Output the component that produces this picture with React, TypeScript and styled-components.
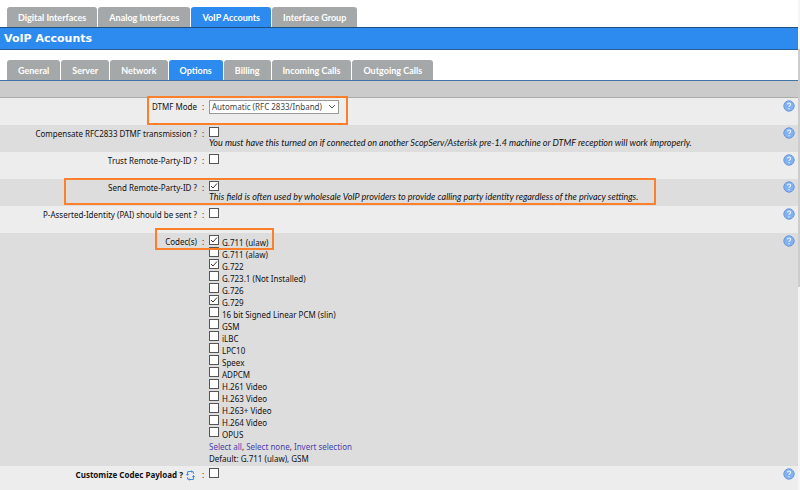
import React, { useState } from "react";
import styled, { createGlobalStyle, css } from "styled-components";

const GlobalStyle = createGlobalStyle`
  * { box-sizing: border-box; }
  html, body { margin: 0; height: 100%; background: #fff; }
  body {
    overflow: hidden;
    color: #111;
    font-family: "Noto Sans", sans-serif;
    font-size: 8px;
    line-height: 12px;
  }
`;

const Page = styled.div`
  display: flex;
  height: 100vh;
  overflow: hidden;
`;

const Main = styled.main`
  flex: 1;
  min-width: 0;
`;

const ScrollTrack = styled.div`
  flex: 0 0 2px;
  padding-top: 49px;
  background: #f5f5f5;
`;

const ScrollThumb = styled.div`
  height: 54%;
  background: #cdcdcd;
`;

const TabBar = styled.nav<{ $gap: number }>`
  display: flex;
  gap: 1px;
  padding: ${(p) => p.$gap}px 7px 0;
`;

const Tab = styled.button<{ $active?: boolean }>`
  height: 20px;
  padding: 1px 11px 0;
  border: 0;
  border-radius: 3px 3px 0 0;
  background: ${(p) => (p.$active ? "#2d8aef" : "#a5a8a8")};
  color: #fff;
  font: bold 9px/12px Lato, sans-serif;
  white-space: nowrap;
`;

const Title = styled.h1`
  height: 23px;
  margin: 0;
  padding: 0 4px;
  border-top: 1px solid #1d4f82;
  border-bottom: 1px solid #245f9c;
  background: #2d8aef;
  color: #fff;
  font: bold 11px/22px "DejaVu Sans", sans-serif;
`;

const Band = styled.div`
  height: 18px;
  border-top: 1px solid #3f74a8;
  border-bottom: 1px solid #ababab;
  background: #cbcbcb;
`;

const Row = styled.div<{ $dark?: boolean }>`
  position: relative;
  display: grid;
  grid-template-columns: 197px 12px 1fr 18px;
  min-height: 27px;
  padding-top: 2px;
  background: ${(p) => (p.$dark ? "#dddddd" : "#ededed")};
`;

const LabelCell = styled.div<{ $bold?: boolean }>`
  display: flex;
  justify-content: flex-end;
  align-items: center;
  gap: 3px;
  height: 14px;
  font-weight: ${(p) => (p.$bold ? 700 : 400)};
  white-space: nowrap;

  svg { margin-right: 2px; }
`;

const Colon = styled.span`
  padding-left: 5px;
  line-height: 14px;
`;

const Field = styled.div`
  min-width: 0;
`;

const Hint = styled.p`
  margin: 0;
  font-family: Lato, sans-serif;
  font-size: 9px;
  font-style: italic;
  line-height: 12px;
  white-space: nowrap;
`;

const Highlight = styled.span<{ $left: number; $width: number; $top: number; $height: number }>`
  position: absolute;
  ${(p) => css`
    left: ${p.$left}px;
    top: ${p.$top}px;
    width: ${p.$width}px;
    height: ${p.$height}px;
  `}
  border: 2px solid #fd7f2b;
  pointer-events: none;
  z-index: 1;
`;

const HelpButton = styled.button`
  width: 12px;
  height: 12px;
  padding: 0;
  border: 0;
  background: none;
  justify-self: center;

  svg { display: block; }
`;

const SelectBox = styled.span`
  display: inline-grid;
  align-items: center;
  width: 130px;

  select, svg { grid-area: 1 / 1; }
  svg { justify-self: end; margin-right: 3px; pointer-events: none; }
`;

const Select = styled.select`
  appearance: none;
  height: 14px;
  width: 100%;
  padding: 0 2px;
  border: 1px solid #999;
  border-radius: 0;
  background: #fff;
  color: #444;
  font: inherit;
`;

const Tick = styled.span`
  display: grid;
  flex: none;
  width: 10px;
  height: 10px;

  input, svg { grid-area: 1 / 1; }
  svg { pointer-events: none; }
`;

const TickInput = styled.input`
  appearance: none;
  width: 10px;
  height: 10px;
  margin: 0;
  border: 1px solid #555;
  background: #fff;
`;

const CodecList = styled.ul`
  margin: 0;
  padding: 0;
  list-style: none;
`;

const CodecItem = styled.li`
  display: flex;
  gap: 3px;
  height: 12px;
`;

const CodecLabel = styled.label`
  line-height: 16px;
  white-space: nowrap;
`;

const Note = styled.p`
  margin: 0;
  line-height: 12px;
`;

const Codecs = styled.div`
  display: grid;
  gap: 2px;
  padding-bottom: 1px;
`;

const Link = styled.a`
  color: #4a3fae;
  text-decoration: none;
`;

function Check({ id, on }: { id: string; on?: boolean }) {
  const [checked, setChecked] = useState(!!on);
  return (
    <Tick>
      <TickInput id={id} type="checkbox" checked={checked} onChange={() => setChecked(!checked)} />
      {checked && (
        <svg width="10" height="10" viewBox="0 0 10 10" fill="none" stroke="#333" strokeWidth="1">
          <path d="M2 5l2 2 4-4.500" />
        </svg>
      )}
    </Tick>
  );
}

function Help({ topic }: { topic: string }) {
  return (
    <HelpButton type="button" aria-label={`Help: ${topic}`}>
      <svg width="12" height="12" viewBox="0 0 12 12" fill="none">
        <circle cx="6" cy="6" r="5.2" fill="#82b2f3" stroke="#6a98dc" strokeWidth="1" />
        <path d="M4.500 4.600c0-2.100 3.100-2 3.100-.1C7.600 5.700 6 5.700 6 7.100" stroke="#f2f7ff" strokeWidth="1.100" />
        <circle cx="6" cy="8.800" r=".7" fill="#f2f7ff" />
      </svg>
    </HelpButton>
  );
}

const RefreshIcon = () => (
  <svg width="9" height="11" viewBox="0 0 9 11" fill="none" stroke="#3c8ade" strokeWidth="1.100">
    <path d="M1.500 5V2.500Q1.500 1.500 2.500 1.500H6Q7.500 1.500 7.500 3V3.800" />
    <path d="M7.500 5.500V8.500Q7.500 9.500 6.500 9.500H3Q1.500 9.500 1.500 8V7.200" />
    <path d="M0 4l1.500 1.500L3 4M6 7l1.500-1.500L9 7M5 .5l1.200 1L5 2.500M4 8.500l-1.200 1L4 10.500" strokeWidth=".7" />
  </svg>
);

interface OptionRowProps {
  id: string;
  label: string;
  dark?: boolean;
  bold?: boolean;
  icon?: React.ReactNode;
  mark?: [number, number, number, number];
  children: React.ReactNode;
}

function OptionRow({ id, label, dark, bold, icon, mark, children }: OptionRowProps) {
  return (
    <Row $dark={dark}>
      <LabelCell $bold={bold}>
        <label htmlFor={id}>{label}</label>
        {icon}
      </LabelCell>
      <Colon>:</Colon>
      <Field>{children}</Field>
      <Help topic={label} />
      {mark && <Highlight $left={mark[0]} $top={mark[1]} $width={mark[2]} $height={mark[3]} />}
    </Row>
  );
}

const sections = ["Digital Interfaces", "Analog Interfaces", "VoIP Accounts", "Interface Group"];
const pages = ["General", "Server", "Network", "Options", "Billing", "Incoming Calls", "Outgoing Calls"];
const codecs = [
  "G.711 (ulaw)", "G.711 (alaw)", "G.722", "G.723.1 (Not Installed)", "G.726", "G.729",
  "16 bit Signed Linear PCM (slin)", "GSM", "iLBC", "LPC10", "Speex", "ADPCM",
  "H.261 Video", "H.263 Video", "H.263+ Video", "H.264 Video", "OPUS",
];
const enabled = ["G.711 (ulaw)", "G.722", "G.729"];

export default function App() {
  return (
    <>
      <GlobalStyle />
      <Page>
        <Main>
          <TabBar $gap={7}>
            {sections.map((s) => (
              <Tab key={s} type="button" $active={s === "VoIP Accounts"}>{s}</Tab>
            ))}
          </TabBar>
          <Title>VoIP Accounts</Title>
          <TabBar $gap={10}>
            {pages.map((s) => (
              <Tab key={s} type="button" $active={s === "Options"}>{s}</Tab>
            ))}
          </TabBar>
          <Band />
          <OptionRow id="dtmf" label="DTMF Mode" mark={[147, -2, 201, 29]}>
            <SelectBox>
              <Select id="dtmf">
                <option>Automatic (RFC 2833/Inband)</option>
              </Select>
              <svg width="8" height="6" viewBox="0 0 8 6" fill="none" stroke="#555">
                <path d="M1 1l3 3 3-3" />
              </svg>
            </SelectBox>
          </OptionRow>
          <OptionRow id="compensate" label="Compensate RFC2833 DTMF transmission ?" dark>
            <Check id="compensate" />
            <Hint>
              You must have this turned on if connected on another ScopServ/Asterisk pre-1.4 machine or DTMF reception will work improperly.
            </Hint>
          </OptionRow>
          <OptionRow id="trust" label="Trust Remote-Party-ID ?">
            <Check id="trust" />
          </OptionRow>
          <OptionRow id="send" label="Send Remote-Party-ID ?" dark mark={[64, -1, 592, 27]}>
            <Check id="send" on />
            <Hint>
              This field is often used by wholesale VoIP providers to provide calling party identity regardless of the privacy settings.
            </Hint>
          </OptionRow>
          <OptionRow id="pai" label="P-Asserted-Identity (PAI) should be sent ?">
            <Check id="pai" />
          </OptionRow>
          <OptionRow id="codec-0" label="Codec(s)" dark mark={[155, -5, 119, 22]}>
            <Codecs>
              <CodecList>
                {codecs.map((c, i) => (
                  <CodecItem key={c}>
                    <Check id={`codec-${i}`} on={enabled.includes(c)} />
                    <CodecLabel htmlFor={`codec-${i}`}>{c}</CodecLabel>
                  </CodecItem>
                ))}
              </CodecList>
              <div>
                <Note>
                  <Link href="#all">Select all</Link>, <Link href="#none">Select none</Link>,{" "}
                  <Link href="#invert">Invert selection</Link>
                </Note>
                <Note>Default: G.711 (ulaw), GSM</Note>
              </div>
            </Codecs>
          </OptionRow>
          <OptionRow id="payload" label="Customize Codec Payload ?" bold icon={<RefreshIcon />}>
            <Check id="payload" />
          </OptionRow>
        </Main>
        <ScrollTrack>
          <ScrollThumb />
        </ScrollTrack>
      </Page>
    </>
  );
}
